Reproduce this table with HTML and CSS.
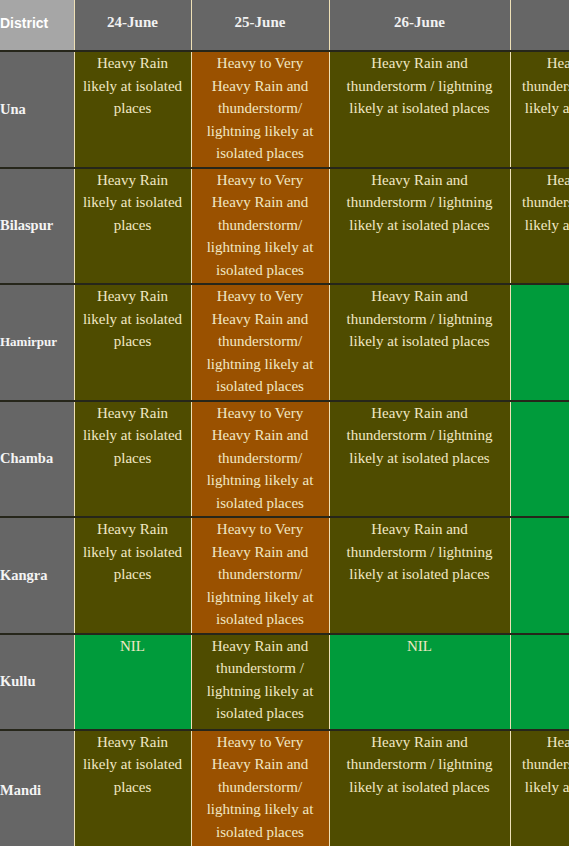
FILE: index.html
```html
<!DOCTYPE html>
<html lang="en">
<head>
<meta charset="utf-8">
<title>District Weather Warnings</title>
<link rel="stylesheet" href="styles.css">
</head>
<body>
<table class="warn">
  <colgroup>
    <col class="c-dist">
    <col class="c-d1">
    <col class="c-d2">
    <col class="c-d3">
    <col class="c-d4">
  </colgroup>
  <thead>
    <tr>
      <th class="h-dist">District</th>
      <th class="h-date">24-June</th>
      <th class="h-date">25-June</th>
      <th class="h-date">26-June</th>
      <th class="h-date">27-June</th>
    </tr>
  </thead>
  <tbody>
    <tr>
      <th class="dist">Una</th>
      <td class="y">Heavy Rain likely at isolated places</td>
      <td class="o">Heavy to Very Heavy Rain and thunderstorm/ lightning likely at isolated places</td>
      <td class="y">Heavy Rain and thunderstorm / lightning likely at isolated places</td>
      <td class="y">Heavy Rain and thunderstorm / lightning likely at isolated places</td>
    </tr>
    <tr>
      <th class="dist">Bilaspur</th>
      <td class="y">Heavy Rain likely at isolated places</td>
      <td class="o">Heavy to Very Heavy Rain and thunderstorm/ lightning likely at isolated places</td>
      <td class="y">Heavy Rain and thunderstorm / lightning likely at isolated places</td>
      <td class="y">Heavy Rain and thunderstorm / lightning likely at isolated places</td>
    </tr>
    <tr>
      <th class="dist dist-sm">Hamirpur</th>
      <td class="y">Heavy Rain likely at isolated places</td>
      <td class="o">Heavy to Very Heavy Rain and thunderstorm/ lightning likely at isolated places</td>
      <td class="y">Heavy Rain and thunderstorm / lightning likely at isolated places</td>
      <td class="g">NIL</td>
    </tr>
    <tr>
      <th class="dist">Chamba</th>
      <td class="y">Heavy Rain likely at isolated places</td>
      <td class="o">Heavy to Very Heavy Rain and thunderstorm/ lightning likely at isolated places</td>
      <td class="y">Heavy Rain and thunderstorm / lightning likely at isolated places</td>
      <td class="g">NIL</td>
    </tr>
    <tr>
      <th class="dist">Kangra</th>
      <td class="y">Heavy Rain likely at isolated places</td>
      <td class="o">Heavy to Very Heavy Rain and thunderstorm/ lightning likely at isolated places</td>
      <td class="y">Heavy Rain and thunderstorm / lightning likely at isolated places</td>
      <td class="g">NIL</td>
    </tr>
    <tr class="row-short">
      <th class="dist">Kullu</th>
      <td class="g">NIL</td>
      <td class="y">Heavy Rain and thunderstorm / lightning likely at isolated places</td>
      <td class="g">NIL</td>
      <td class="g">NIL</td>
    </tr>
    <tr class="row-last">
      <th class="dist">Mandi</th>
      <td class="y">Heavy Rain likely at isolated places</td>
      <td class="o">Heavy to Very Heavy Rain and thunderstorm/ lightning likely at isolated places</td>
      <td class="y">Heavy Rain and thunderstorm / lightning likely at isolated places</td>
      <td class="y">Heavy Rain and thunderstorm / lightning likely at isolated places</td>
    </tr>
  </tbody>
</table>
</body>
</html>
```

FILE: styles.css
```css
html, body {
  margin: 0;
  padding: 0;
  overflow: hidden;
  background: #ffffff;
}

.warn {
  border-collapse: collapse;
  table-layout: fixed;
  width: 680px;
  font-family: "Liberation Serif", "Times New Roman", serif;
}

.c-dist { width: 74px; }
.c-d1 { width: 117px; }
.c-d2 { width: 138px; }
.c-d3 { width: 181px; }
.c-d4 { width: 170px; }

.warn th,
.warn td {
  border-right: 1px solid #eee0b6;
  border-bottom: 2px solid #26261a;
}

.h-dist,
.h-date {
  height: 45px;
  padding: 0 0 5px;
  color: #f1f1f1;
  background: #666666;
  font-weight: bold;
  vertical-align: middle;
}

.h-dist {
  background: #a6a6a6;
  text-align: left;
  font-family: "Liberation Sans", Arial, sans-serif;
  font-size: 14px;
  color: #ffffff;
}

.h-date {
  font-size: 15px;
  text-align: center;
}

.dist {
  background: #666666;
  color: #f4f4f4;
  font-size: 14.5px;
  font-weight: bold;
  text-align: left;
  vertical-align: middle;
  padding: 0;
}

.dist-sm {
  font-size: 13px;
}

.warn td {
  font-size: 15px;
  line-height: 22.5px;
  color: #f1e8c4;
  text-align: center;
  vertical-align: top;
  padding: 0 6px 2px;
}

.row-short td {
  padding-bottom: 4px;
}

.row-last td {
  padding-bottom: 8px;
}

.y { background: #4f4c00; }
.o { background: #9a5100; }
.g {
  background: #009b3b;
  color: #c6eec2;
}
```
